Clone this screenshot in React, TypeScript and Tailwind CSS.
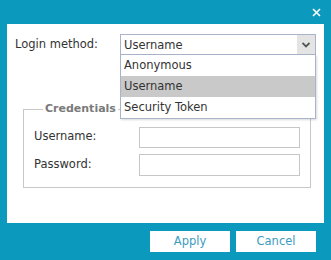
import React from "react"

const options = ["Anonymous", "Username", "Security Token"]

export default function App() {
  const selected = "Username"
  return (
    <div className="w-[331px] h-[260px] bg-[#0b9abd] flex flex-col font-['DejaVu_Sans',sans-serif] text-[11.5px] text-[#333333]">
      {/* Title bar */}
      <div className="h-[24px] flex items-center justify-end pr-[10px]">
        <svg width="9" height="9" viewBox="0 0 9 9" className="mt-[1px]">
          <path d="M1 1 L8 8 M8 1 L1 8" stroke="#ffffff" strokeWidth="1.6" />
        </svg>
      </div>

      {/* Body */}
      <div className="relative mx-[7px] h-[199px] bg-white">
        <div className="relative z-10 flex items-center pt-[10px] pl-[8px]">
          <span className="w-[105px]">Login method:</span>
          <div className="relative">
            <div className="flex w-[196px] h-[21px] border border-[#aab4c8] bg-white">
              <span className="flex-1 pl-[3px] leading-[20px]">{selected}</span>
              <span className="w-[18px] bg-[#e4e4e4] flex items-center justify-center">
                <svg width="8" height="6" viewBox="0 0 8 6">
                  <path d="M0.5 1 L4 4.5 L7.5 1" stroke="#555555" strokeWidth="1.8" fill="none" />
                </svg>
              </span>
            </div>
            {/* Open dropdown list */}
            <ul className="absolute left-0 top-[21px] z-10 w-[196px] border border-t-0 border-[#aab4c8] bg-white shadow-[1px_1px_2px_rgba(0,0,0,0.15)]">
              {options.map((o) => (
                <li
                  key={o}
                  className={`h-[21px] leading-[21px] pl-[3px] ${o === selected ? "bg-[#c9c9c9]" : ""}`}
                >
                  {o}
                </li>
              ))}
            </ul>
          </div>
        </div>

        {/* Credentials group */}
        <fieldset className="mt-[46px] ml-[16px] w-[288px] h-[87px] border border-[#c8c8c8] pl-[10px]">
          <legend className="ml-[9px] px-[2px] text-[11px] font-bold text-[#7a7a7a]">Credentials</legend>
          <div className="flex flex-col gap-[6px] mt-[9px]">
            <div className="flex items-center">
              <span className="w-[105px]">Username:</span>
              <input className="w-[161px] h-[21px] border border-[#c6c6c6] outline-none" />
            </div>
            <div className="flex items-center">
              <span className="w-[105px]">Password:</span>
              <input type="password" className="w-[161px] h-[22px] border border-[#c6c6c6] outline-none" />
            </div>
          </div>
        </fieldset>
      </div>

      {/* Footer */}
      <div className="flex justify-end gap-[6px] pt-[8px] pr-[15px]">
        <button className="w-[80px] h-[21px] bg-white text-[#3b9cc0]">Apply</button>
        <button className="w-[80px] h-[21px] bg-white text-[#3b9cc0]">Cancel</button>
      </div>
    </div>
  )
}
